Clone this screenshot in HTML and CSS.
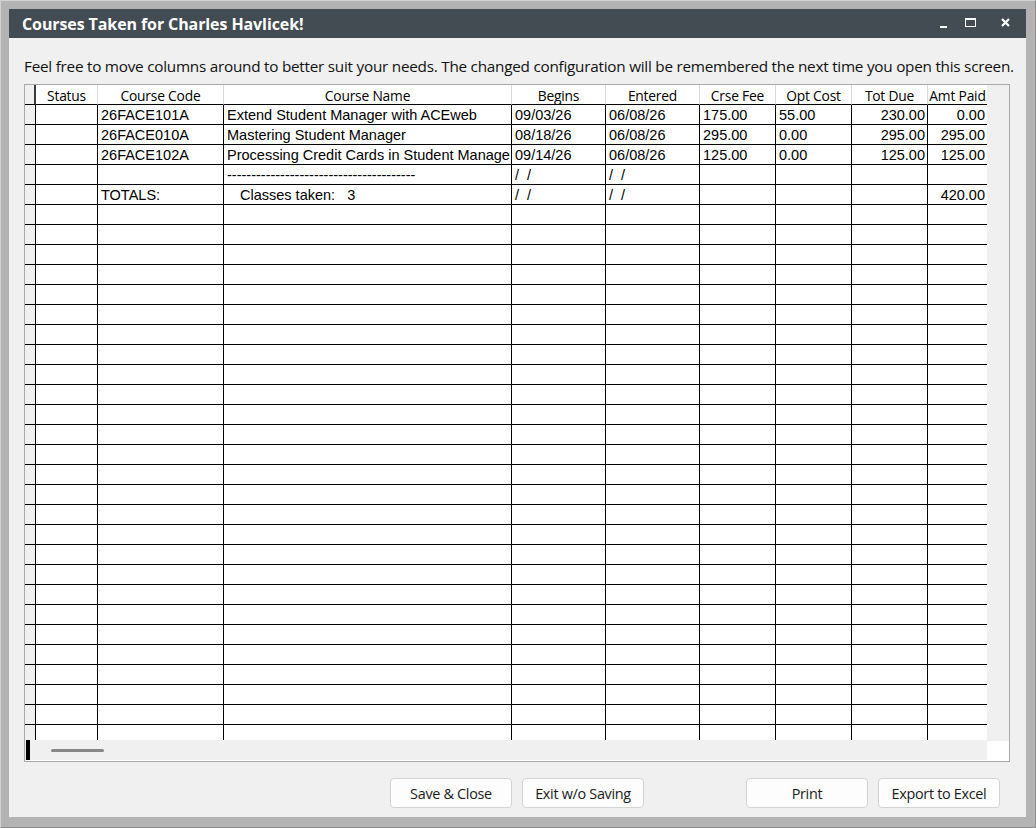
FILE: index.html
```html
<!DOCTYPE html>
<html lang="en">
<head>
	<meta charset="utf-8">
	<title>Courses Taken</title>
	<link rel="stylesheet" href="styles.css">
</head>
<body>
	<div class="frame">
		<div class="window">
			<div class="titlebar">
				<h1>Courses Taken for Charles Havlicek!</h1>
				<div class="tb-buttons">
					<span class="tb-min"></span>
					<span class="tb-max"></span>
					<svg class="tb-close" width="9" height="9" viewBox="0 0 9 9"><path d="M1 1 L8 8 M8 1 L1 8" stroke="#fff" stroke-width="2.2" /></svg>
				</div>
			</div>
			<div class="content">
				<p class="hint">Feel free to move columns around to better suit your needs. The changed configuration will be remembered the next time you open this screen.</p>

				<div class="grid">
					<div class="grid-main">
						<div class="row head">
							<div class="cell ind"></div>
							<div class="cell">Status</div>
							<div class="cell">Course Code</div>
							<div class="cell">Course Name</div>
							<div class="cell">Begins</div>
							<div class="cell">Entered</div>
							<div class="cell">Crse Fee</div>
							<div class="cell">Opt Cost</div>
							<div class="cell">Tot Due</div>
							<div class="cell">Amt Paid</div>
						</div>
						<div class="rows" id="rows">
							<div class="row">
								<div class="cell ind"></div><div class="cell"></div>
								<div class="cell">26FACE101A</div>
								<div class="cell">Extend Student Manager with ACEweb</div>
								<div class="cell">09/03/26</div>
								<div class="cell">06/08/26</div>
								<div class="cell">175.00</div>
								<div class="cell">55.00</div>
								<div class="cell num">230.00</div>
								<div class="cell num">0.00</div>
							</div>
							<div class="row">
								<div class="cell ind"></div><div class="cell"></div>
								<div class="cell">26FACE010A</div>
								<div class="cell">Mastering Student Manager</div>
								<div class="cell">08/18/26</div>
								<div class="cell">06/08/26</div>
								<div class="cell">295.00</div>
								<div class="cell">0.00</div>
								<div class="cell num">295.00</div>
								<div class="cell num">295.00</div>
							</div>
							<div class="row">
								<div class="cell ind"></div><div class="cell"></div>
								<div class="cell">26FACE102A</div>
								<div class="cell">Processing Credit Cards in Student Manage</div>
								<div class="cell">09/14/26</div>
								<div class="cell">06/08/26</div>
								<div class="cell">125.00</div>
								<div class="cell">0.00</div>
								<div class="cell num">125.00</div>
								<div class="cell num">125.00</div>
							</div>
							<div class="row">
								<div class="cell ind"></div><div class="cell"></div>
								<div class="cell"></div>
								<div class="cell">---------------------------------------</div>
								<div class="cell">/&nbsp;&nbsp;/</div>
								<div class="cell">/&nbsp;&nbsp;/</div>
								<div class="cell"></div><div class="cell"></div>
								<div class="cell"></div><div class="cell"></div>
							</div>
							<div class="row">
								<div class="cell ind"></div><div class="cell"></div>
								<div class="cell">TOTALS:</div>
								<div class="cell"><span class="classes">Classes taken:&nbsp;&nbsp; 3</span></div>
								<div class="cell">/&nbsp;&nbsp;/</div>
								<div class="cell">/&nbsp;&nbsp;/</div>
								<div class="cell"></div><div class="cell"></div>
								<div class="cell"></div>
								<div class="cell num">420.00</div>
							</div>
						</div>
						<div class="hscroll">
							<span class="hs-mark"></span>
							<span class="hs-thumb"></span>
						</div>
					</div>
					<div class="vscroll">
						<div class="vs-track"></div>
						<div class="vs-corner"></div>
					</div>
				</div>

				<div class="actions">
					<button class="btn">Save &amp; Close</button>
					<button class="btn">Exit w/o Saving</button>
					<button class="btn gap-left">Print</button>
					<button class="btn">Export to Excel</button>
				</div>
			</div>
		</div>
	</div>

	<script>
		// fill the empty rows of the grid
		var rows = document.getElementById('rows');
		for (var i = 0; i < 28; i++) {
			var r = document.createElement('div');
			r.className = 'row';
			for (var c = 0; c < 10; c++) {
				var d = document.createElement('div');
				d.className = c === 0 ? 'cell ind' : 'cell';
				r.appendChild(d);
			}
			rows.appendChild(r);
		}
	</script>
</body>
</html>
```

FILE: styles.css
```css
:root {
	--frame-color:   #b3b3b3;
	--title-bg:      #434b53;
	--panel-bg:      #f0f0f0;
	--grid-border:   #a9a9a9;
	--line-color:    #000000;
	--head-line:     #d9d9d9;
	--ui-font: "Open Sans", "Noto Sans", sans-serif;
	--cell-font: "Liberation Sans", Arial, sans-serif;
}
* {
	margin: 0;
	padding: 0;
	box-sizing: border-box;
}
body {
	background: var(--frame-color);
}
.frame {
	width: 1036px;
	height: 828px;
	padding: 8px 9px 10px 8px;
	background: var(--frame-color);
	border-top: 1px solid #d2d2d2;
	border-left: 1px solid #d2d2d2;
	border-right: 1px solid #8c8c8c;
	border-bottom: 1px solid #8c8c8c;
}
.window {
	height: 100%;
	display: flex;
	flex-direction: column;
	background: var(--panel-bg);
}
.titlebar {
	height: 29px;
	flex: none;
	display: flex;
	align-items: center;
	justify-content: space-between;
	padding-left: 13px;
	background: var(--title-bg);
}
.titlebar h1 {
	font-family: var(--ui-font);
	font-size: 16px;
	font-weight: 700;
	color: #fff;
	letter-spacing: -0.1px;
}
.tb-buttons {
	display: flex;
	align-items: center;
	height: 100%;
}
.tb-min {
	width: 7px;
	height: 2px;
	margin-top: 6px;
	background: #fff;
	margin-right: 18px;
}
.tb-max {
	width: 11px;
	height: 9px;
	border: 1px solid #fff;
	border-top-width: 2px;
	margin-right: 25px;
	margin-top: -2px;
}
.tb-close {
	margin-right: 16px;
	margin-top: -2px;
}
.content {
	flex: 1;
	padding: 18px 0 0 15px;
	display: flex;
	flex-direction: column;
}
.hint {
	font-family: var(--ui-font);
	font-size: 15.3px;
	color: #111;
	line-height: 20px;
	letter-spacing: -0.25px;
	white-space: nowrap;
	margin-bottom: 8px;
}
.grid {
	width: 986px;
	height: 678px;
	border: 1px solid var(--grid-border);
	background: #fff;
	display: flex;
}
.grid-main {
	width: 962px;
	display: flex;
	flex-direction: column;
}
.row {
	display: grid;
	grid-template-columns: 11px 62px 126px 288px 94px 94px 76px 76px 76px 59px;
	height: 20px;
}
.cell {
	height: 20px;
	border-right: 1px solid var(--line-color);
	border-bottom: 1px solid var(--line-color);
	font-family: var(--cell-font);
	font-size: 14.5px;
	line-height: 19px;
	padding: 1px 0 0 3px;
	white-space: nowrap;
	overflow: hidden;
	color: #000;
}
.cell:last-child {
	border-right: 0;
}
.cell.num {
	text-align: right;
	padding-right: 2px;
}
.cell.ind {
	background: var(--panel-bg);
	padding: 0;
}
.head .cell {
	font-family: var(--ui-font);
	font-size: 13.8px;
	line-height: 21px;
	text-align: center;
	padding: 0;
	border-right-color: var(--head-line);
	letter-spacing: -0.2px;
}
.head .cell.ind {
	border-right: 2px solid #3a3a3a;
}
.classes {
	padding-left: 13px;
}
.rows {
	height: 635px;
	overflow: hidden;
}
.hscroll {
	height: 20px;
	background: var(--panel-bg);
	display: flex;
	align-items: center;
}
.hs-mark {
	width: 4px;
	height: 20px;
	margin-left: 1px;
	background: #000;
}
.hs-thumb {
	width: 53px;
	height: 3px;
	border-radius: 2px;
	margin-left: 21px;
	background: #888;
}
.vscroll {
	flex: 1;
	display: flex;
	flex-direction: column;
}
.vs-track {
	flex: 1;
	background: var(--panel-bg);
}
.vs-corner {
	height: 20px;
	background: #fff;
}
.actions {
	display: flex;
	justify-content: flex-end;
	gap: 10px;
	margin-top: 16px;
	padding-right: 26px;
}
.btn {
	width: 122px;
	height: 30px;
	font-family: var(--ui-font);
	font-size: 14.4px;
	letter-spacing: -0.3px;
	color: #1a1a1a;
	background: #fdfdfd;
	border: 1px solid #d3d3d3;
	border-radius: 4px;
}
.btn.gap-left {
	margin-left: 92px;
}
```
